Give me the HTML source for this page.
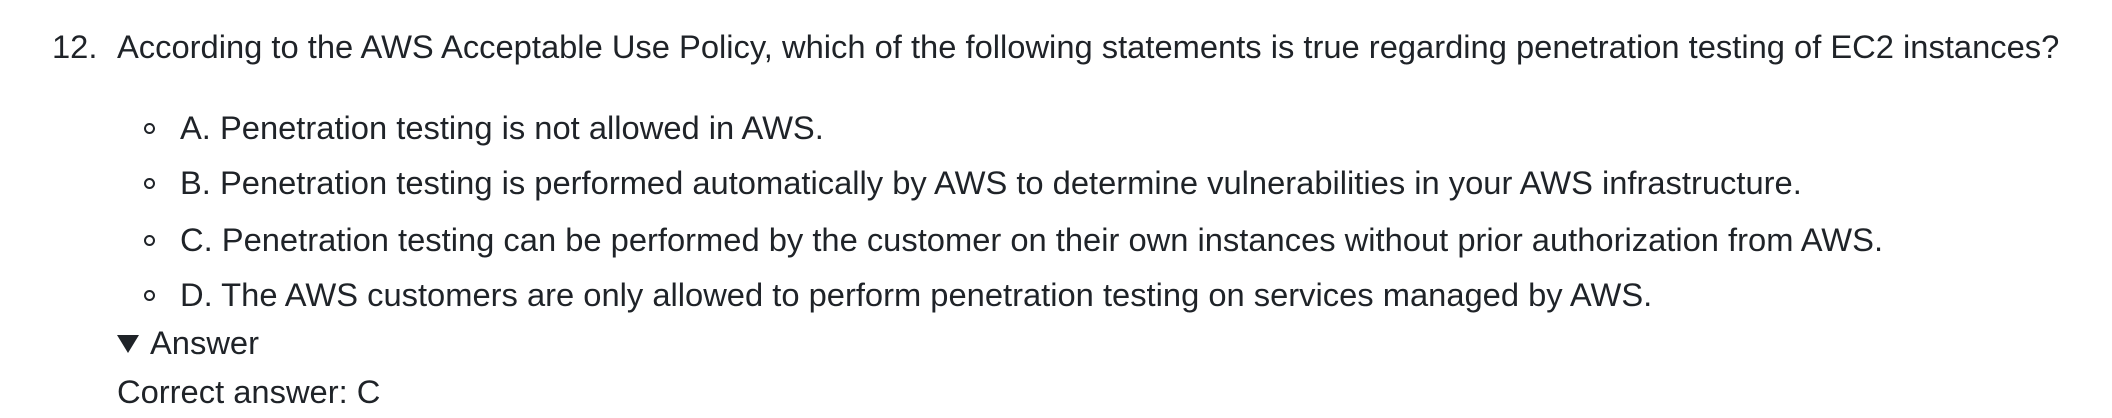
<!DOCTYPE html>
<html><head><meta charset="utf-8"><style>
html,body{margin:0;padding:0;background:#fff;}
body{width:2112px;height:418px;position:relative;overflow:hidden;font-family:"Liberation Sans",Arial,sans-serif;font-size:32.7px;color:#1f2328;}
.l{position:absolute;white-space:nowrap;line-height:50px;height:50px;}
.b{position:absolute;width:11px;height:11px;border:2px solid #1f2328;border-radius:50%;box-sizing:border-box;}
</style></head><body>
<div class="l" style="left:52px;top:22px">12.</div>
<div class="l" style="left:117px;top:22px">According to the AWS Acceptable Use Policy, which of the following statements is true regarding penetration testing of EC2 instances?</div>
<div class="b" style="left:144px;top:123px"></div>
<div class="l" style="left:180px;top:103px">A. Penetration testing is not allowed in AWS.</div>
<div class="b" style="left:144px;top:178px"></div>
<div class="l" style="left:180px;top:158px">B. Penetration testing is performed automatically by AWS to determine vulnerabilities in your AWS infrastructure.</div>
<div class="b" style="left:144px;top:235px"></div>
<div class="l" style="left:180px;top:215px">C. Penetration testing can be performed by the customer on their own instances without prior authorization from AWS.</div>
<div class="b" style="left:144px;top:290px"></div>
<div class="l" style="left:180px;top:270px">D. The AWS customers are only allowed to perform penetration testing on services managed by AWS.</div>
<svg style="position:absolute;left:117px;top:335px" width="22" height="18"><path d="M0 0H22L11 18Z" fill="#1f2328"/></svg>
<div class="l" style="left:150px;top:318px">Answer</div>
<div class="l" style="left:117px;top:367px">Correct answer: C</div>
</body></html>
